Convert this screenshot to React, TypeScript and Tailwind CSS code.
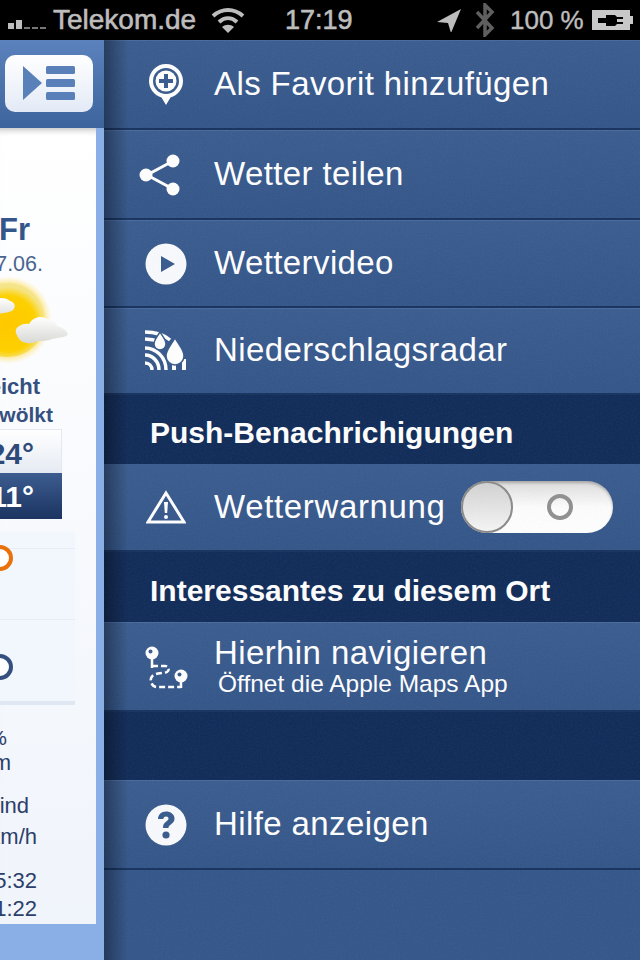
import React from 'react';

const IconAddPin = () => (
  <svg width="36" height="44" viewBox="0 0 36 44">
    <path d="M18 1C8.600 1 1 8.600 1 18c0 8 5.500 14.500 12.500 16.500L18 42l4.500-7.500C29.500 32.500 35 26 35 18 35 8.600 27.400 1 18 1z" fill="#fff" />
    <circle cx="18" cy="18" r="13" fill="#375a8d" />
    <circle cx="18" cy="18" r="10.500" fill="#fff" />
    <path d="M16 11h4v5h5v4h-5v5h-4v-5h-5v-4h5z" fill="#375a8d" />
  </svg>
);

const IconShare = () => (
  <svg width="42" height="42" viewBox="0 0 42 42" className="ml-[-12px]">
    <path d="M34 7L8 21l26 14" fill="none" stroke="#fff" strokeWidth="3" />
    <circle cx="34" cy="7" r="6.500" fill="#fff" />
    <circle cx="7" cy="21" r="6.500" fill="#fff" />
    <circle cx="34" cy="35" r="6.500" fill="#fff" />
  </svg>
);

const IconPlay = () => (
  <svg width="42" height="42" viewBox="0 0 42 42">
    <circle cx="21" cy="21" r="20.500" fill="#f8fafd" />
    <path d="M16 13l14 8-14 8z" fill="#375a8d" />
  </svg>
);

const IconRadar = () => (
  <svg width="44" height="44" viewBox="0 0 44 44">
    <g fill="none" stroke="#fff" strokeWidth="3.500">
      <path d="M1 3c10 0 18 2 25 8" />
      <path d="M1 10c5 0 10 1 15 3" />
      <path d="M1 19c11 0 21 9 21 22" />
      <path d="M1 26c8 0 14 7 14 15" />
      <path d="M1 34c4 0 7 3 7 7" />
      <path d="M30 30v11M40 30v11" strokeWidth="4" />
    </g>
    <path d="M16 3c3 5 6 8 6 12 0 3.500-2.700 6-6 6s-6-2.500-6-6c0-4 3-7 6-12z" fill="#fff" stroke="#375a8d" strokeWidth="1.500" />
    <path d="M31 9c4 7 9 12 9 18 0 5-4 9-9 9s-9-4-9-9c0-6 5-11 9-18z" fill="#fff" stroke="#375a8d" strokeWidth="1.500" />
  </svg>
);

const IconWarning = () => (
  <svg width="40" height="34" viewBox="0 0 40 34">
    <path d="M20 3L2 32h36z" fill="none" stroke="#fff" strokeWidth="3" strokeLinejoin="miter" />
    <path d="M18 12h4l-.8 11h-2.400z" fill="#fff" />
    <circle cx="20" cy="27" r="2" fill="#fff" />
  </svg>
);

const IconRoute = () => (
  <svg width="44" height="46" viewBox="0 0 44 46">
    <g fill="none" stroke="#fff" strokeWidth="2.500">
      <path d="M8 14v10M37 36v8" />
      <path d="M8 22h13c4 0 5 4 2 6-2 1-8 1-11 2-4 1-6 4-5 8 1 3 3 5 6 5h24" strokeDasharray="6 3" />
    </g>
    <circle cx="8" cy="9" r="6.500" fill="#fff" />
    <circle cx="6.500" cy="7.500" r="2" fill="#375a8d" />
    <circle cx="37" cy="32" r="6.500" fill="#fff" />
    <circle cx="35.500" cy="30.500" r="2" fill="#375a8d" />
  </svg>
);

const IconHelp = () => (
  <svg width="42" height="42" viewBox="0 0 42 42">
    <circle cx="21" cy="21" r="20.500" fill="#f8fafd" />
    <path d="M13 15c0-4.500 3.500-7.500 8-7.500s8.500 2.700 8.500 7c0 3.300-2 4.800-4 6.200-1.500 1-2 1.800-2 3.300h-5.500c0-3 .8-4.700 3-6.300 1.500-1.100 2.500-1.800 2.500-3.100 0-1.300-1-2.100-2.500-2.100-1.600 0-2.600 1-2.700 2.500z" fill="#375a8d" />
    <circle cx="21" cy="31" r="3.600" fill="#375a8d" />
  </svg>
);

const SunCloud = () => (
  <svg width="110" height="100" viewBox="0 0 110 100">
    <defs>
      <radialGradient id="sunGlow">
        <stop offset="0.800" stopColor="#ffd84a" stopOpacity="0.700" />
        <stop offset="1" stopColor="#ffe98a" stopOpacity="0" />
      </radialGradient>
      <radialGradient id="sunBody" cx="0.500" cy="0.550">
        <stop offset="0" stopColor="#ffc800" />
        <stop offset="0.750" stopColor="#fdd000" />
        <stop offset="1" stopColor="#f5e58a" />
      </radialGradient>
      <linearGradient id="cloudFill" x1="0" y1="0" x2="0" y2="1">
        <stop offset="0" stopColor="#ffffff" />
        <stop offset="1" stopColor="#d8d8d4" />
      </linearGradient>
    </defs>
    <circle cx="48" cy="47" r="44" fill="url(#sunGlow)" />
    <circle cx="48" cy="47" r="37" fill="url(#sunBody)" />
    <path d="M30 31c4-7 15-8 20-3 5 1 6 6 3 9-5 4-12 2-20 6-5 3-16 5-20 1-3-5 6-12 17-13z" fill="url(#cloudFill)" />
    <path d="M58 54c3-3 8-4 11-3 4-7 12-9 19-5 5 0 9 4 9 7 5 1 10 5 11 8-2 4-9 3-16 5-7 3-14 1-19 4-7 1-13-1-15-6-3-4-3-8 0-10z" fill="url(#cloudFill)" />
  </svg>
);

const StatusBar = () => (
  <div className="h-10 shrink-0 bg-black flex items-center text-[#bdbdbd] font-['Liberation_Sans',sans-serif]">
    <svg width="40" height="14" viewBox="0 0 40 14" className="ml-2 mt-1 shrink-0">
      <rect x="0" y="8" width="6" height="6" fill="#bdbdbd" />
      <rect x="8" y="5" width="6" height="9" fill="#bdbdbd" />
      <rect x="16" y="12" width="6" height="2" fill="#777" />
      <rect x="24" y="12" width="6" height="2" fill="#777" />
      <rect x="32" y="12" width="6" height="2" fill="#777" />
    </svg>
    <span className="ml-[5px] w-[160px] shrink-0 text-[28px] whitespace-nowrap [-webkit-text-stroke:0.6px_#bdbdbd]">Telekom.de</span>
    <svg width="34" height="26" viewBox="0 0 34 26" className="ml-[-2px] shrink-0">
      <g fill="none" stroke="#bdbdbd" strokeWidth="4">
        <path d="M2 9c9-8 21-8 30 0" />
        <path d="M8 15c5.500-5 12.500-5 18 0" />
      </g>
      <path d="M17 26l-6-6c3.500-3 8.500-3 12 0z" fill="#bdbdbd" />
    </svg>
    <span className="ml-[40px] w-[68px] shrink-0 text-[27px] [-webkit-text-stroke:0.6px_#bdbdbd]">17:19</span>
    <svg width="24" height="24" viewBox="0 0 24 24" className="ml-[84px] shrink-0">
      <path d="M24 1L0 14l11 1 3 10z" fill="#bdbdbd" />
    </svg>
    <svg width="20" height="34" viewBox="0 0 20 34" className="ml-[14px] shrink-0">
      <path d="M2 9l15 16-7 7V2l7 7L2 25" fill="none" stroke="#5f5f5f" strokeWidth="3.500" />
    </svg>
    <span className="ml-[15px] w-[74px] shrink-0 text-[26px] whitespace-nowrap [-webkit-text-stroke:0.4px_#bdbdbd]">100 %</span>
    <svg width="42" height="22" viewBox="0 0 42 22" className="ml-[8px] shrink-0">
      <path d="M0 1h38v6h3v8h-3v6H0z" fill="#c8c8c8" />
      <path d="M6 9h8V6h9l2 2h6v2h-6v3h6v2h-6l-2 2h-9v-3H6z" fill="#000" />
    </svg>
  </div>
);

const Row = ({
  icon,
  label,
  sub,
  height,
}: {
  icon: React.ReactNode;
  label: string;
  sub?: string;
  height: string;
}) => (
  <div className={`${height} shrink-0 flex items-center bg-gradient-to-b from-[#395b8f] to-[#325488] border-t border-[#48699c] border-b-2 border-b-[#15315d]`}>
    <div className="w-[110px] pl-[30px] shrink-0">
      <div className="w-16 flex justify-center">{icon}</div>
    </div>
    <div className="min-w-0 mb-[2px]">
      <div className="text-[33px] leading-[36px] text-white tracking-[0.4px] whitespace-nowrap">{label}</div>
      {sub && <div className="text-[24.500px] leading-[26px] ml-[4px] text-white whitespace-nowrap">{sub}</div>}
    </div>
  </div>
);

const SectionHeader = ({ label, height }: { label: string; height: string }) => (
  <div className={`${height} shrink-0 flex items-center pl-[46px] pt-[6px] bg-[#0f2a58] text-white font-bold text-[30px] whitespace-nowrap`}>
    {label}
  </div>
);

const Toggle = () => (
  <div className="ml-auto mr-[27px] relative w-[152px] h-[52px] rounded-full bg-gradient-to-b from-[#dcdcdc] via-[#fdfdfd] to-white flex items-center justify-end shadow-[inset_0_2px_3px_rgba(0,0,0,0.25)]">
    <div className="mr-[40px] w-[26px] h-[26px] rounded-full border-[4px] border-[#8f8f8f]" />
    <div className="absolute left-0 top-0 w-[52px] h-[52px] rounded-full bg-gradient-to-b from-[#d2d2d2] to-[#f6f6f6] border-2 border-[#8a8a8a]" />
  </div>
);

const WeatherColumn = () => (
  <div className="w-[104px] shrink-0 flex flex-col bg-[#8aaee6]">
    <div className="h-[88px] shrink-0 bg-gradient-to-b from-[#5c82bd] to-[#3e649d] flex items-center pl-[5px] pb-[2px]">
      <div className="w-[88px] h-[57px] rounded-[10px] bg-gradient-to-b from-white to-[#e3eaf6] flex items-center justify-center">
        <svg width="52" height="34" viewBox="0 0 52 34">
          <path d="M0 0l19 17L0 34z" fill="#5a80b9" />
          <rect x="23" y="0" width="29" height="8" rx="1.500" fill="#5a80b9" />
          <rect x="23" y="13" width="29" height="8" rx="1.500" fill="#5a80b9" />
          <rect x="23" y="26" width="29" height="8" rx="1.500" fill="#5a80b9" />
        </svg>
      </div>
    </div>
    <div className="h-[796px] w-[96px] shrink-0 overflow-hidden bg-gradient-to-b from-white to-[#f0f4fb] flex flex-col items-end text-[#2c3f6a] shadow-[inset_0_8px_6px_-6px_rgba(0,0,0,0.25)]">
      <div className="mt-[84px] mr-[66px] text-[31px] leading-[36px] font-bold text-[#34568a] whitespace-nowrap">Fr</div>
      <div className="mt-[4px] mr-[53px] text-[21.500px] leading-[24px] text-[#4a6490] whitespace-nowrap">17.06.</div>
      <div className="mr-[26px] mt-[-3px] shrink-0">
        <SunCloud />
      </div>
      <div className="mr-[56px] text-[22px] leading-[28px] font-bold text-[#34507f] whitespace-nowrap">leicht</div>
      <div className="mr-[43px] text-[21px] leading-[28px] font-bold text-[#34507f] whitespace-nowrap">bewölkt</div>
      <div className="mr-[34px] w-[80px] shrink-0 h-[44px] flex items-center justify-end pr-[27px] pt-1 border border-[#e4e9f1] bg-gradient-to-b from-white to-[#e6ebf3] text-[30px] font-bold text-[#2f4a78]">24°</div>
      <div className="mr-[34px] w-[80px] shrink-0 h-[46px] flex items-center justify-end pr-[28px] bg-gradient-to-b from-[#3d5d90] to-[#1b3461] text-[30px] font-bold text-white">11°</div>
      <div className="mt-[13px] mr-[21px] w-[90px] shrink-0 bg-[#f2f6fd] flex flex-col items-end border-b-4 border-[#dfe7f3]">
        <div className="h-[17px] w-full border-b border-[#e8eef8]" />
        <div className="h-[71px] w-full border-b border-[#e8eef8] relative">
          <div className="absolute right-[62px] top-[-4px] w-[26px] h-[26px] rounded-full border-[4px] border-[#e8710c] bg-white" />
        </div>
        <div className="h-[81px] w-full relative">
          <div className="absolute right-[62px] top-[34px] w-[26px] h-[26px] rounded-full border-[4px] border-[#34507f] bg-white" />
        </div>
      </div>
      <div className="mt-[20px] mr-[89px] text-[21px] leading-[25px] whitespace-nowrap">5%</div>
      <div className="mr-[85px] text-[22px] leading-[26px] whitespace-nowrap">1 m</div>
      <div className="mt-[14px] mr-[67px] text-[22px] leading-[32px] whitespace-nowrap">Wind</div>
      <div className="mr-[59px] text-[22px] leading-[30px] whitespace-nowrap">9 km/h</div>
      <div className="mt-[15px] mr-[59px] text-[22px] leading-[28px] whitespace-nowrap">05:32</div>
      <div className="mr-[59px] text-[22px] leading-[27px] whitespace-nowrap">21:22</div>
    </div>
  </div>
);

export default function App() {
  return (
    <div className="w-[640px] h-[960px] overflow-hidden flex flex-col bg-black font-['Liberation_Sans',sans-serif]">
      <StatusBar />
      <div className="flex flex-1 min-h-0">
        <WeatherColumn />
        <div className="relative flex-1 flex flex-col bg-[#33558a]">
          <Row height="h-[90px]" icon={<IconAddPin />} label="Als Favorit hinzufügen" />
          <Row height="h-[90px]" icon={<IconShare />} label="Wetter teilen" />
          <Row height="h-[88px]" icon={<IconPlay />} label="Wettervideo" />
          <Row height="h-[87px]" icon={<IconRadar />} label="Niederschlagsradar" />
          <SectionHeader height="h-[69px]" label="Push-Benachrichigungen" />
          <div className="h-[88px] shrink-0 flex items-center bg-gradient-to-b from-[#395b8f] to-[#325488] border-b-2 border-[#15315d]">
            <div className="w-[110px] pl-[30px] shrink-0">
              <div className="w-16 flex justify-center">
                <IconWarning />
              </div>
            </div>
            <div className="text-[33px] text-white tracking-[0.65px] whitespace-nowrap">Wetterwarnung</div>
            <Toggle />
          </div>
          <SectionHeader height="h-[70px]" label="Interessantes zu diesem Ort" />
          <Row height="h-[90px]" icon={<IconRoute />} label="Hierhin navigieren" sub="Öffnet die Apple Maps App" />
          <div className="h-[68px] shrink-0 bg-[#0f2a58]" />
          <Row height="h-[90px]" icon={<IconHelp />} label="Hilfe anzeigen" />
          <div className="flex-1" />
          <svg className="absolute inset-0 w-full h-full pointer-events-none opacity-[0.07]">
            <filter id="grain">
              <feTurbulence type="fractalNoise" baseFrequency="0.6" numOctaves="2" />
              <feColorMatrix type="saturate" values="0" />
            </filter>
            <rect width="100%" height="100%" filter="url(#grain)" />
          </svg>
          <div className="absolute inset-y-0 left-0 w-6 bg-gradient-to-r from-black/35 to-transparent pointer-events-none" />
        </div>
      </div>
    </div>
  );
}
